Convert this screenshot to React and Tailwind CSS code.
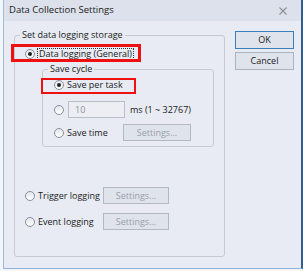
import React from 'react';

const font = { fontFamily: '"Open Sans", "Noto Sans", sans-serif' };

function Radio({ checked }) {
  return (
    <span className="flex h-[10px] w-[10px] shrink-0 items-center justify-center rounded-full border border-[#8a8f99] bg-gradient-to-b from-[#e4e6ea] to-white">
      {checked && <span className="h-[4px] w-[4px] rounded-full bg-[#222]" />}
    </span>
  );
}

function SettingsButton({ className = '' }) {
  return (
    <div
      className={`flex h-[17px] shrink-0 items-center justify-center border border-[#b3b8c2] bg-[#dfe3ec] text-[9px] text-[#9aa0aa] ${className}`}
    >
      Settings...
    </div>
  );
}

export default function App() {
  return (
    <div className="h-[271px] w-[303px] whitespace-nowrap bg-[#f3f5f9] pl-[3px] pb-[2px]" style={font}>
      <div className="flex h-[269px] flex-col border-b border-l border-r-2 border-b-[#8fb3d9] border-l-[#9dbbdc] border-r-[#2e5f94] bg-[#e8ebf3]">
        {/* title bar */}
        <div className="flex h-[21px] shrink-0 items-center justify-between bg-[#dce1ec] pl-[5px] pr-[14px]">
          <span className="text-[9.5px] text-[#1b1b1b]">Data Collection Settings</span>
          <svg width="8" height="8" viewBox="0 0 8 8" className="stroke-[#8c8f96]">
            <path d="M0.5 0.5 L7.5 7.5 M7.5 0.5 L0.5 7.5" strokeWidth="1.1" />
          </svg>
        </div>

        <div className="flex flex-1 pt-[7px]">
          {/* storage group */}
          <fieldset className="relative ml-[10px] h-[229px] w-[211px] rounded-[3px] border border-[#c6cad3]">
            <legend className="ml-[5px] px-[2px] text-[9px] leading-[14px] text-[#1b1b1b]">
              Set data logging storage
            </legend>

            <div className="pointer-events-none absolute left-[-4px] top-[2px] h-[18px] w-[130px] border-[3px] border-[#ee1111]" />

            <div className="pl-[10px]">
              <div className="mt-[6px] flex h-[12px] items-center gap-[2px]">
                <Radio checked />
                <span className="border border-dotted border-[#333] px-[1px] text-[9px] leading-[10px] text-[#1b1b1b]">
                  Data logging (General)
                </span>
              </div>

              {/* save cycle group */}
              <fieldset className="relative ml-[17px] mt-[3px] h-[84px] w-[172px] rounded-[3px] border border-[#c6cad3]">
                <legend className="ml-[5px] px-[2px] text-[9px] leading-[12px] text-[#1b1b1b]">Save cycle</legend>

                <div className="pointer-events-none absolute left-[-2px] top-[3px] h-[16px] w-[95px] border-[2.5px] border-[#ee1111]" />

                <div className="pl-[11px]">
                  <div className="mt-[4px] flex h-[12px] items-center gap-[3px]">
                    <Radio checked />
                    <span className="text-[9px] text-[#1b1b1b]">Save per task</span>
                  </div>

                  <div className="mt-[10px] flex h-[17px] items-center">
                    <Radio />
                    <div className="ml-[4px] flex h-[17px] w-[57px] items-center border border-[#b9bec8] bg-[#eceef3] pl-[6px] text-[9px] text-[#8a8f99]">
                      10
                    </div>
                    <span className="ml-[5px] text-[9px] text-[#1b1b1b]">ms (1 ~ 32767)</span>
                  </div>

                  <div className="mt-[6px] flex h-[17px] items-center">
                    <Radio />
                    <span className="ml-[3px] w-[56px] text-[9px] text-[#1b1b1b]">Save time</span>
                    <SettingsButton className="w-[68px]" />
                  </div>
                </div>
              </fieldset>

              <div className="mt-[40px] flex h-[17px] items-center">
                <Radio />
                <span className="ml-[3px] w-[65px] text-[9px] text-[#1b1b1b]">Trigger logging</span>
                <SettingsButton className="w-[66px]" />
              </div>

              <div className="mt-[9px] flex h-[17px] items-center">
                <Radio />
                <span className="ml-[3px] w-[65px] text-[9px] text-[#1b1b1b]">Event logging</span>
                <SettingsButton className="w-[66px]" />
              </div>
            </div>
          </fieldset>

          {/* buttons */}
          <div className="ml-[10px] mt-[3px] flex flex-col gap-[3px]">
            <div className="flex h-[18px] w-[59px] items-center justify-center border border-[#3c7fbd] bg-[#dfe3ec] text-[9px] text-[#1b1b1b]">
              OK
            </div>
            <div className="flex h-[18px] w-[59px] items-center justify-center border border-[#adb3be] bg-[#dfe3ec] text-[9px] text-[#1b1b1b]">
              Cancel
            </div>
          </div>
        </div>
      </div>
    </div>
  );
}
